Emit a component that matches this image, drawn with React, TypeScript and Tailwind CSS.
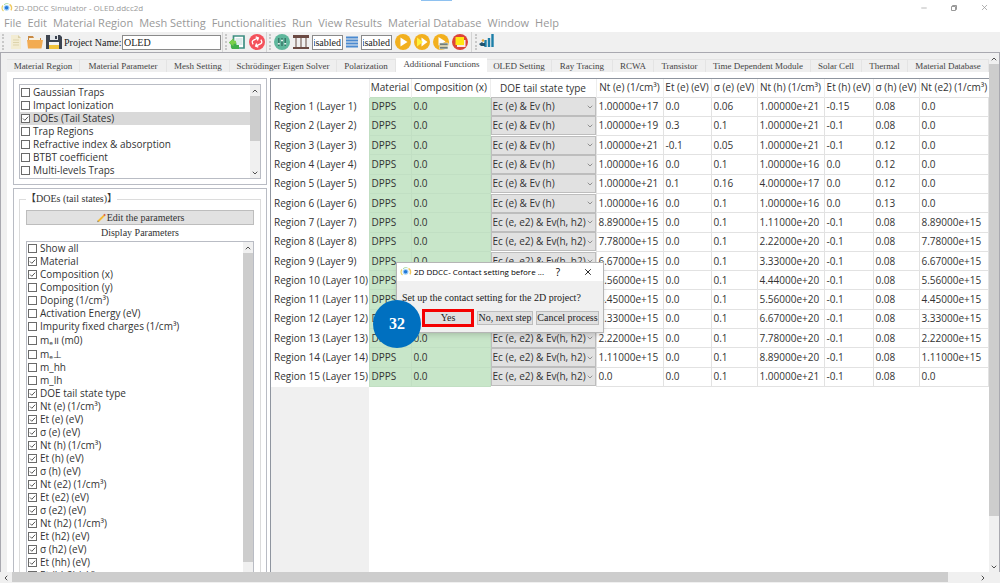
import React, { useState } from 'react';
import { ChevronDown, ChevronLeft, ChevronRight, ChevronUp, Minus, X } from 'lucide-react';

const menus = [
  'File', 'Edit', 'Material Region', 'Mesh Setting', 'Functionalities',
  'Run', 'View Results', 'Material Database', 'Window', 'Help'
];

const tabs = [
  { label: 'Material Region', width: 'w-[73px]' },
  { label: 'Material Parameter', width: 'w-[87px]' },
  { label: 'Mesh Setting', width: 'w-[63px]' },
  { label: 'Schrödinger Eigen Solver', width: 'w-[107px]' },
  { label: 'Polarization', width: 'w-[59px]' },
  { label: 'Additional Functions', width: 'w-[91px]' },
  { label: 'OLED Setting', width: 'w-[65px]' },
  { label: 'Ray Tracing', width: 'w-[61px]' },
  { label: 'RCWA', width: 'w-[41px]' },
  { label: 'Transistor', width: 'w-[52px]' },
  { label: 'Time Dependent Module', width: 'w-[105px]' },
  { label: 'Solar Cell', width: 'w-[51px]' },
  { label: 'Thermal', width: 'w-[46px]' },
  { label: 'Material Database', width: 'w-[81px]' }
];

const functionList = [
  'Gaussian Traps', 'Impact Ionization', 'DOEs (Tail States)', 'Trap Regions',
  'Refractive index & absorption', 'BTBT coefficient', 'Multi-levels Traps'
];

const displayParams: { label: string; checked?: boolean; tall?: boolean }[] = [
  { label: 'Show all' },
  { label: 'Material', checked: true },
  { label: 'Composition (x)', checked: true },
  { label: 'Composition (y)' },
  { label: 'Doping (1/cm³)' },
  { label: 'Activation Energy (eV)' },
  { label: 'Impurity fixed charges (1/cm³)' },
  { label: 'mₑ॥ (m0)', tall: true },
  { label: 'mₑ⊥', tall: true },
  { label: 'm_hh' },
  { label: 'm_lh' },
  { label: 'DOE tail state type', checked: true },
  { label: 'Nt (e) (1/cm³)', checked: true },
  { label: 'Et (e) (eV)', checked: true },
  { label: 'σ (e) (eV)', checked: true },
  { label: 'Nt (h) (1/cm³)', checked: true },
  { label: 'Et (h) (eV)', checked: true },
  { label: 'σ (h) (eV)', checked: true },
  { label: 'Nt (e2) (1/cm³)', checked: true },
  { label: 'Et (e2) (eV)', checked: true },
  { label: 'σ (e2) (eV)', checked: true },
  { label: 'Nt (h2) (1/cm³)', checked: true },
  { label: 'Et (h2) (eV)', checked: true },
  { label: 'σ (h2) (eV)', checked: true },
  { label: 'Et (hh) (eV)', checked: true },
  { label: 'Et (hh2) (eV)', checked: true }
];

const columns = [
  'Material', 'Composition (x)', 'DOE tail state type', 'Nt (e) (1/cm³)', 'Et (e) (eV)',
  'σ (e) (eV)', 'Nt (h) (1/cm³)', 'Et (h) (eV)', 'σ (h) (eV)', 'Nt (e2) (1/cm³)'
];

const SINGLE = 'Ec (e) & Ev (h)';
const DOUBLE = 'Ec (e, e2) & Ev(h, h2)';

const regions = [
  [SINGLE, '1.00000e+17', '0.0', '0.06', '1.00000e+21', '-0.15', '0.08', '0.0'],
  [SINGLE, '1.00000e+19', '0.3', '0.1', '1.00000e+21', '-0.1', '0.08', '0.0'],
  [SINGLE, '1.00000e+21', '-0.1', '0.05', '1.00000e+21', '-0.1', '0.12', '0.0'],
  [SINGLE, '1.00000e+16', '0.0', '0.1', '1.00000e+16', '0.0', '0.12', '0.0'],
  [SINGLE, '1.00000e+21', '0.1', '0.16', '4.00000e+17', '0.0', '0.12', '0.0'],
  [SINGLE, '1.00000e+16', '0.0', '0.1', '1.00000e+16', '0.0', '0.13', '0.0'],
  [DOUBLE, '8.89000e+15', '0.0', '0.1', '1.11000e+20', '-0.1', '0.08', '8.89000e+15'],
  [DOUBLE, '7.78000e+15', '0.0', '0.1', '2.22000e+20', '-0.1', '0.08', '7.78000e+15'],
  [DOUBLE, '6.67000e+15', '0.0', '0.1', '3.33000e+20', '-0.1', '0.08', '6.67000e+15'],
  [DOUBLE, '5.56000e+15', '0.0', '0.1', '4.44000e+20', '-0.1', '0.08', '5.56000e+15'],
  [DOUBLE, '4.45000e+15', '0.0', '0.1', '5.56000e+20', '-0.1', '0.08', '4.45000e+15'],
  [DOUBLE, '3.33000e+15', '0.0', '0.1', '6.67000e+20', '-0.1', '0.08', '3.33000e+15'],
  [DOUBLE, '2.22000e+15', '0.0', '0.1', '7.78000e+20', '-0.1', '0.08', '2.22000e+15'],
  [DOUBLE, '1.11000e+15', '0.0', '0.1', '8.89000e+20', '-0.1', '0.08', '1.11000e+15'],
  [DOUBLE, '0.0', '0.0', '0.1', '1.00000e+21', '-0.1', '0.08', '0.0']
];

const Logo = () => (
  <svg viewBox="0 0 12 10" className="w-3 h-[10px] shrink-0">
    <path d="M2 2.5C.6 4 .6 6.500 2.500 8" fill="none" stroke="#e9d36a" strokeWidth="1.200" />
    <path d="M8.500 1.500c2.200 1 2.600 3.800 1.500 5.800" fill="none" stroke="#f0c95c" strokeWidth="1.400" />
    <path d="M3 1.800c1.200-1.200 3-1.500 4.500-1" fill="none" stroke="#a9d9a4" strokeWidth="1" />
    <circle cx="5.600" cy="4.800" r="2.900" fill="#9fd0f7" />
    <circle cx="5.600" cy="4.800" r="1.800" fill="#2478d8" />
  </svg>
);

const CheckItem: React.FC<{
  label: string;
  defaultChecked?: boolean;
  selected?: boolean;
  tall?: boolean;
}> = ({ label, defaultChecked, selected, tall }) => (
  <label className={`flex items-center gap-[3px] shrink-0 px-px text-[10px] leading-[13px] whitespace-nowrap ${tall ? 'h-[14px]' : 'h-[13px]'} ${selected ? 'bg-[#d9d9d9]' : ''}`}>
    <span className="grid shrink-0">
      <input
        type="checkbox"
        defaultChecked={defaultChecked}
        className="peer col-start-1 row-start-1 appearance-none w-[9px] h-[9px] border border-[#6a6a6a] bg-white"
      />
      <svg viewBox="0 0 9 9" className="col-start-1 row-start-1 w-[9px] h-[9px] invisible peer-checked:visible pointer-events-none">
        <path d="M2 4.500l1.800 1.800L7.200 2.700" fill="none" stroke="#444" strokeWidth="0.900" />
      </svg>
    </span>
    {label}
  </label>
);

const VerticalScroll: React.FC<{ thumb: string; down?: boolean }> = ({ thumb, down = true }) => (
  <div className="flex flex-col w-[10px] shrink-0 bg-[#f0f0f0]">
    <button aria-label="Scroll up" className="flex items-center justify-center h-[11px] shrink-0">
      <ChevronUp className="w-2 h-2 text-[#505050]" strokeWidth={3} />
    </button>
    <div className="flex-1 min-h-0">
      <div className={`bg-[#cdcdcd] ${thumb}`} />
    </div>
    {down && (
      <button aria-label="Scroll down" className="flex items-center justify-center h-[11px] shrink-0">
        <ChevronDown className="w-2 h-2 text-[#505050]" strokeWidth={3} />
      </button>
    )}
  </div>
);

const Handle = () => (
  <div className="h-4 w-[3px] shrink-0 border-l-2 border-dotted border-[#c8c8c8]" />
);

const ToolButton: React.FC<{ label: string; children: React.ReactNode }> = ({ label, children }) => (
  <button aria-label={label} className="w-4 h-4 shrink-0">
    <svg viewBox="0 0 16 16" className="w-4 h-4">{children}</svg>
  </button>
);

const Toolbar = () => (
  <div className="flex items-center h-5 shrink-0 bg-[#f0f0f0] pl-[2px] text-[10px] font-['Liberation_Serif',serif] text-[#222]">
    <Handle />
    <div className="flex items-center gap-[3px] pl-[3px]">
      <ToolButton label="New">
        <path d="M3 1h7l3 3v11H3z" fill="#f3ecd2" />
        <path d="M10 1v3h3z" fill="#d9cfa8" />
        <path d="M5 6h6M5 8.500h6M5 11h6" stroke="#ddd3ac" strokeWidth="1" />
      </ToolButton>
      <ToolButton label="Open">
        <path d="M1 2h5l1 2h7v3H1z" fill="#c98a45" />
        <path d="M2 4h11v4H2z" fill="#f7f1e2" />
        <path d="M0 6h16l-1.500 8.500H1z" fill="#f2ab52" />
      </ToolButton>
      <ToolButton label="Save">
        <path d="M0 1h14l2 2v12H0z" fill="#3d4450" />
        <path d="M4 1h8v5H4z" fill="#e6e9ec" />
        <path d="M9 2h2v3H9z" fill="#3d4450" />
        <path d="M3 8h10v7H3z" fill="#f4f4f4" />
        <path d="M3 11h10v4H3z" fill="#f3c43c" />
      </ToolButton>
    </div>
    <label htmlFor="project" className="pl-[2px] w-[60px] whitespace-nowrap">Project Name:</label>
    <input id="project" defaultValue="OLED" className="w-[99px] h-[15px] border border-[#8a8a8a] bg-white px-[1px] leading-[13px]" />
    <div className="ml-[1px] mr-[2px] h-5 border-l border-[#d4d4d4]" />
    <Handle />
    <div className="flex items-center gap-1 pl-[1px]">
      <ToolButton label="Import structure">
        <path d="M4.500 2h10.500v12H4.500z" fill="#fff" stroke="#3f8f83" strokeWidth="1.700" />
        <path d="M6.500 4h7v7h-7z" fill="#dcebea" />
        <path d="M0 8.500l4.500-4v2.300c3 .2 3 2.200 3 4.200H10v4H3c-1-1-1.500-2.500-1-4z" fill="#3fae4b" />
        <path d="M0 8.500l4.500-4v2.300H7v3H4.500v2.500z" fill="#7ad04a" />
      </ToolButton>
      <ToolButton label="Refresh">
        <circle cx="8" cy="8" r="8" fill="#f4515b" />
        <path d="M3.500 8.500V7a2.200 2.200 0 0 1 2.200-2.200h5M9 2.800l2 2-2 2M12.500 7.500V9a2.200 2.200 0 0 1-2.200 2.200h-5M7 13.200l-2-2 2-2" fill="none" stroke="#fff" strokeWidth="1.300" transform="rotate(-25 8 8)" />
      </ToolButton>
    </div>
    <div className="ml-[1px] mr-[2px] h-5 border-l border-[#d4d4d4]" />
    <Handle />
    <div className="flex items-center gap-[3px] pl-[2px]">
      <ToolButton label="Parameters">
        <circle cx="8" cy="8" r="8" fill="#5fb79c" />
        <path d="M4.800 4v8M8 4v8M11.200 4v8" stroke="#33665c" strokeWidth="1.200" />
        <path d="M3.800 9.800h2M7 6.500h2M10.200 9.800h2" stroke="#e6f5ef" strokeWidth="1.500" />
      </ToolButton>
      <ToolButton label="Contacts">
        <path d="M0 1h16v3H0zM0 13h16v2H0z" fill="#6b4a43" />
        <path d="M3 4v9M8 4v9M13 4v9" stroke="#a3948f" strokeWidth="1.800" />
      </ToolButton>
      <input aria-label="Contact state" dir="rtl" readOnly value="Disabled" className="w-[31px] h-[15px] border border-[#8a8a8a] bg-white px-[1px] leading-[13px]" />
      <button aria-label="Layers" className="w-3 h-4 shrink-0">
        <svg viewBox="0 0 12 16" className="w-3 h-4">
          <path d="M0 3.500h12M0 6.500h12M0 9.500h12M0 12.500h12" stroke="#4b8ad0" strokeWidth="2" />
        </svg>
      </button>
      <input aria-label="Layer state" dir="rtl" readOnly value="Disabled" className="w-[31px] h-[15px] border border-[#8a8a8a] bg-white px-[1px] leading-[13px]" />
      <ToolButton label="Run">
        <circle cx="8" cy="8" r="8" fill="#f2b01e" />
        <path d="M5.500 3.500l7 4.500-7 4.500z" fill="#fff" />
      </ToolButton>
      <ToolButton label="Run all">
        <circle cx="8" cy="8" r="8" fill="#f2b01e" />
        <path d="M7.500 3.500l6 4.500-6 4.500z" fill="#fff" />
        <path d="M3 3.500l6 4.500-6 4.500z" fill="#fff23a" />
      </ToolButton>
      <ToolButton label="Run on server">
        <circle cx="8" cy="8" r="8" fill="#f2b01e" />
        <path d="M5.500 3l7 4.500-7 4z" fill="#fff" />
        <path d="M6.500 9H15v2.500H6.500zM6.500 12.500H15V15H6.500z" fill="#71807c" stroke="#e8eeee" strokeWidth="0.600" />
      </ToolButton>
      <ToolButton label="Stop">
        <circle cx="8" cy="8" r="8" fill="#dd4438" />
        <path d="M5 6h8.500v7H5z" fill="#fbe9e6" />
        <path d="M3.500 3h8.500v8H3.500z" fill="#ffe712" />
      </ToolButton>
    </div>
    <div className="ml-[3px] mr-[3px] h-5 border-l border-[#d4d4d4]" />
    <Handle />
    <div className="pl-[1px]">
      <ToolButton label="Plot results">
        <path d="M6.500 8v7M10 6v9M13.500 2v13" stroke="#1d7fa8" strokeWidth="2.400" />
        <path d="M0 12l3-2 1 1h2v3H2z" fill="#20536e" />
        <circle cx="4" cy="8.500" r="1.300" fill="#e0a33c" />
      </ToolButton>
    </div>
  </div>
);

const RegionTable = () => (
  <div className="flex flex-col flex-1 min-w-0 border-l border-t border-[#8f959f] bg-white overflow-hidden">
    <table className="w-full h-[308px] shrink-0 table-fixed border-collapse text-[10px] leading-[13px] text-[#333]">
      <colgroup>
        <col className="w-[98px]" />
        <col className="w-[42px]" />
        <col className="w-[79px]" />
        <col className="w-[106px]" />
        <col className="w-[67px]" />
        <col className="w-[48px]" />
        <col className="w-[46px]" />
        <col className="w-[67px]" />
        <col className="w-[49px]" />
        <col className="w-[46px]" />
        <col />
      </colgroup>
      <thead>
        <tr className="h-[18px]">
          <th aria-label="Region" />
          {columns.map((name) => (
            <th key={name} className="p-0 border-l border-[#ededed] font-normal whitespace-nowrap">{name}</th>
          ))}
        </tr>
      </thead>
      <tbody>
        {regions.map(([type, ...values], i) => (
          <tr key={i}>
            <th className="p-0 pl-[3px] text-left font-normal whitespace-nowrap">
              Region {i + 1} (Layer {i + 1})
            </th>
            <td className="p-0 pl-[2px] bg-[#c8e6c9] border border-[#c1dfc3]">DPPS</td>
            <td className="p-0 pl-[2px] bg-[#c8e6c9] border border-[#c1dfc3]">0.0</td>
            <td className="p-0">
              <div className="grid items-center">
                <select
                  aria-label={`Tail state type, region ${i + 1}`}
                  defaultValue={type}
                  className="col-start-1 row-start-1 appearance-none w-full h-[19px] pl-[1px] border border-[#bdbdbd] bg-[#e1e1e1]"
                >
                  <option>{SINGLE}</option>
                  <option>{DOUBLE}</option>
                </select>
                <ChevronDown className="col-start-1 row-start-1 justify-self-end mr-[2px] w-2 h-2 text-[#666] pointer-events-none" />
              </div>
            </td>
            {values.map((value, j) => (
              <td key={j} className="p-0 pl-[2px] border border-[#e2e2e2]">{value}</td>
            ))}
          </tr>
        ))}
      </tbody>
    </table>
    <div className="flex-1 w-[98px] bg-[#f0f0f0]" />
  </div>
);

const ContactDialog: React.FC<{ onClose: () => void }> = ({ onClose }) => (
  <div role="dialog" aria-labelledby="dialog-title" className="absolute left-[396px] top-[262px] w-[208px] border border-[#b5b5b5] bg-[#f0f0f0] shadow-md">
    <div className="flex items-center h-[18px] bg-white pl-[3px] text-[8px] text-black">
      <Logo />
      <span id="dialog-title" className="flex-1 min-w-0 pl-[2px] whitespace-nowrap">2D DDCC- Contact setting before ...</span>
      <button aria-label="Help" className="w-[30px] shrink-0 text-[10px]">?</button>
      <button aria-label="Close" onClick={onClose} className="flex justify-center w-[30px] shrink-0">
        <X className="w-[10px] h-[10px]" strokeWidth={2} />
      </button>
    </div>
    <div className="font-['Liberation_Serif',serif] text-[10px] leading-3 text-[#222]">
      <p className="pt-[11px] pl-[5px] whitespace-nowrap">Set up the contact setting for the 2D project?</p>
      <div className="flex items-center gap-[3px] py-[5px] pl-[25px]">
        <button onClick={onClose} className="w-[52px] h-[18px] border-[3px] border-[#f40000] bg-[#e1e1e1]">Yes</button>
        <button className="w-[56px] h-[14px] border border-[#bdbdbd] bg-[#e1e1e1] whitespace-nowrap">No, next step</button>
        <button className="w-[63px] h-[14px] border border-[#bdbdbd] bg-[#e1e1e1] whitespace-nowrap">Cancel process</button>
      </div>
    </div>
    <div className="absolute left-[-24px] top-[37px] flex items-center justify-center w-12 h-12 rounded-full bg-[#0070c0] font-['Liberation_Serif',serif] font-bold text-base text-white">
      32
    </div>
  </div>
);

const App: React.FC = () => {
  const [activeTab, setActiveTab] = useState('Additional Functions');
  const [dialogOpen, setDialogOpen] = useState(true);

  return (
    <div className="relative flex flex-col h-screen overflow-hidden bg-white font-['Open_Sans','Noto_Sans',sans-serif] text-[#333]">
      <div className="absolute left-[421px] top-0 w-[31px] h-px bg-[#8ec1f0]" />

      {/* Title bar */}
      <header className="flex items-center h-[15px] shrink-0 pl-[1px] text-[8px] text-[#999]">
        <Logo />
        <span className="flex-1 pl-[1px]">2D-DDCC Simulator - OLED.ddcc2d</span>
        <button aria-label="Minimize" className="flex justify-center w-[30px]"><Minus className="w-2 h-2" /></button>
        <button aria-label="Restore" className="flex justify-center w-[30px]">
          <svg viewBox="0 0 8 8" className="w-2 h-2" fill="none" stroke="#999" strokeWidth="1">
            <path d="M1.500 2.500h4v4h-4zM2.500 2.500v-1h4v4h-1" />
          </svg>
        </button>
        <button aria-label="Close window" className="flex justify-center w-[31px]"><X className="w-[9px] h-[9px]" /></button>
      </header>

      <nav className="flex items-center gap-[6px] h-[17px] shrink-0 pl-1 text-[11px] text-[#999]">
        {menus.map((menu) => (
          <button key={menu} className="whitespace-nowrap">{menu}</button>
        ))}
      </nav>

      <Toolbar />

      <div className="flex flex-1 min-h-0 border-t border-x border-[#a9a9b0]">
        <div className="flex flex-col flex-1 min-w-0 pl-[6px] pt-[5px] bg-[#f0f0f0]">
          <div role="tablist" className="flex items-end shrink-0 h-[14px] font-['Liberation_Serif',serif] text-[9px] text-[#444]">
            {tabs.map((tab) => (
              <button
                key={tab.label}
                role="tab"
                aria-selected={activeTab === tab.label}
                onClick={() => setActiveTab(tab.label)}
                className={`shrink-0 whitespace-nowrap ${tab.width} ${
                  activeTab === tab.label ? 'h-[14px] bg-white' : 'h-[13px] bg-[#efefef] border-t border-r border-[#e4e4e4]'
                }`}
              >
                {tab.label}
              </button>
            ))}
          </div>

          <div className="flex flex-1 min-h-0 gap-[3px] pl-[6px] pt-[6px] bg-white">
            <div className="flex flex-col gap-[3px] w-[254px] shrink-0">
              <section className="shrink-0 p-[5px] border border-[#b9bcc4]">
                <div className="flex h-[95px] border border-[#b9bcc4]">
                  <div className="flex flex-col flex-1 pt-[1px]">
                    {functionList.map((label) => (
                      <CheckItem
                        key={label}
                        label={label}
                        defaultChecked={label === 'DOEs (Tail States)'}
                        selected={label === 'DOEs (Tail States)'}
                      />
                    ))}
                  </div>
                  <VerticalScroll thumb="h-[45px]" />
                </div>
              </section>

              <section className="flex flex-col flex-1 min-h-0 px-[5px] pt-[3px] border border-b-0 border-[#b9bcc4] font-['Liberation_Serif','Noto_Sans_CJK_TC',serif]">
                <fieldset className="flex flex-col flex-1 min-h-0 min-w-0 px-[6px] border border-b-0 border-[#dcdcdc]">
                  <legend className="text-[10px] leading-[14px] whitespace-nowrap">【DOEs (tail states)】</legend>
                  <button className="flex items-center justify-center gap-[1px] h-[15px] mt-1 shrink-0 border border-[#bdbdbd] bg-[#e1e1e1] text-[10px]">
                    <svg viewBox="0 0 10 10" className="w-[10px] h-[10px]">
                      <path d="M2 8.500L8.200 2.300" stroke="#f5b933" strokeWidth="1.800" />
                      <path d="M8 2.500l1.200-1.200" stroke="#d95c4a" strokeWidth="1.800" />
                      <path d="M1 9.300l.8-1.700 1 1z" fill="#777" />
                    </svg>
                    Edit the parameters
                  </button>
                  <p className="py-[2px] shrink-0 text-center text-[10px] leading-[12px]">Display Parameters</p>
                  <div className="flex flex-1 min-h-0 border border-b-0 border-[#b9bcc4] font-['Open_Sans','Noto_Sans',sans-serif]">
                    <div className="flex flex-col flex-1 min-w-0 overflow-hidden">
                      {displayParams.map((param) => (
                        <CheckItem key={param.label} label={param.label} defaultChecked={param.checked} tall={param.tall} />
                      ))}
                    </div>
                    <VerticalScroll thumb="h-[97%]" down={false} />
                  </div>
                </fieldset>
              </section>
            </div>

            <RegionTable />
          </div>
        </div>
        <VerticalScroll thumb="h-[91%]" />
      </div>

      {/* Horizontal scroll */}
      <div className="flex shrink-0 h-[11px] pr-[11px] bg-[#f0f0f0]">
        <button aria-label="Scroll left" className="flex items-center justify-center w-3">
          <ChevronLeft className="w-2 h-2 text-[#505050]" strokeWidth={3} />
        </button>
        <div className="flex-1">
          <div className="w-[97%] h-[10px] bg-[#cdcdcd]" />
        </div>
        <button aria-label="Scroll right" className="flex items-center justify-center w-3">
          <ChevronRight className="w-2 h-2 text-[#505050]" strokeWidth={3} />
        </button>
      </div>

      {dialogOpen && <ContactDialog onClose={() => setDialogOpen(false)} />}
    </div>
  );
};

export default App;
